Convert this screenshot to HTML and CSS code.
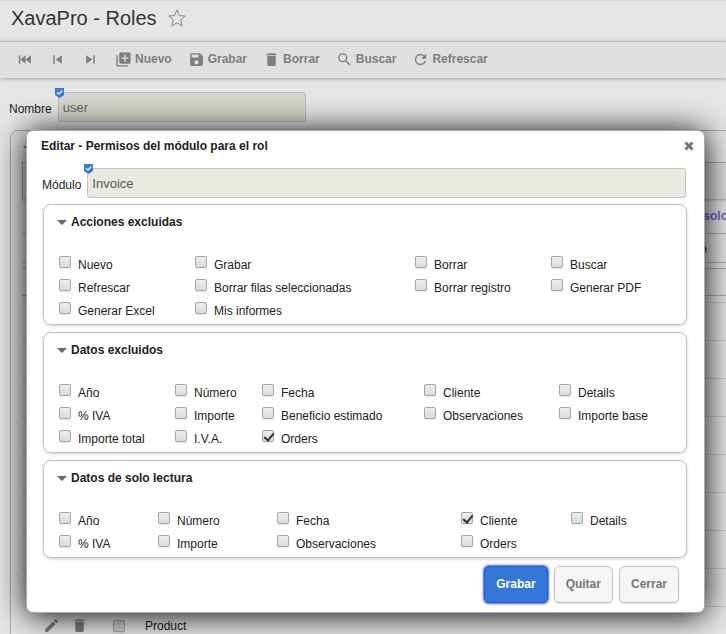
FILE: index.html
```html
<!DOCTYPE html>
<html lang="es">
<head>
<meta charset="utf-8">
<title>XavaPro - Roles</title>
<link rel="stylesheet" href="styles.css">
</head>
<body>
<svg class="defs" aria-hidden="true">
  <symbol id="i-first" viewBox="0 0 24 24"><path d="M21 6v12l-7.500-6zM4 6h2v12H4zM13.500 6v12L6 12z"/></symbol>
  <symbol id="i-prev" viewBox="0 0 24 24"><path d="M6 6h2v12H6zM9.500 12l8.500 6V6z"/></symbol>
  <symbol id="i-next" viewBox="0 0 24 24"><path d="M16 6h2v12h-2zM6 18l8.500-6L6 6z"/></symbol>
  <symbol id="i-new" viewBox="0 0 24 24"><path d="M4 6H2v14a2 2 0 0 0 2 2h14v-2H4V6zm16-4H8a2 2 0 0 0-2 2v12a2 2 0 0 0 2 2h12a2 2 0 0 0 2-2V4a2 2 0 0 0-2-2zm-1 9h-4v4h-2v-4H9V9h4V5h2v4h4v2z"/></symbol>
  <symbol id="i-save" viewBox="0 0 24 24"><path d="M17 3H5a2 2 0 0 0-2 2v14a2 2 0 0 0 2 2h14a2 2 0 0 0 2-2V7l-4-4zm-5 16a3 3 0 1 1 0-6 3 3 0 0 1 0 6zm3-10H5V5h10v4z"/></symbol>
  <symbol id="i-trash" viewBox="0 0 24 24"><path d="M6 19a2 2 0 0 0 2 2h8a2 2 0 0 0 2-2V7H6v12zM19 4h-3.500l-1-1h-5l-1 1H5v2h14V4z"/></symbol>
  <symbol id="i-search" viewBox="0 0 24 24"><path d="M15.500 14h-.79l-.28-.27A6.470 6.470 0 0 0 16 9.500 6.500 6.500 0 1 0 9.500 16c1.610 0 3.090-.59 4.230-1.570l.27.28v.79l5 4.990L20.490 19l-4.990-5zm-6 0a4.500 4.500 0 1 1 0-9 4.500 4.500 0 0 1 0 9z"/></symbol>
  <symbol id="i-refresh" viewBox="0 0 24 24"><path d="M17.650 6.350A7.960 7.960 0 0 0 12 4a8 8 0 1 0 7.730 10h-2.080A6 6 0 1 1 12 6c1.660 0 3.140.69 4.220 1.780L13 11h7V4l-2.350 2.350z"/></symbol>
  <symbol id="i-edit" viewBox="0 0 24 24"><path d="M3 17.250V21h3.750L17.810 9.940l-3.750-3.750L3 17.250zM20.710 7.040a1 1 0 0 0 0-1.410l-2.340-2.340a1 1 0 0 0-1.410 0l-1.830 1.830 3.750 3.750 1.830-1.830z"/></symbol>
  <symbol id="i-key" viewBox="0 0 9 10"><path fill="#3b78dc" d="M0 0h9v7L4.500 10 0 7z"/><path fill="none" stroke="#fff" stroke-width="1.200" d="M2 4.300l1.900 1.900L7.300 2.500"/></symbol>
</svg>

<header class="title-bar">
  <h1>XavaPro - Roles</h1>
  <svg class="star" viewBox="0 0 18 18" aria-hidden="true"><path d="M9 .8l2.300 5.800 6 .4-4.700 4 1.600 6L9 13.700 3.800 17l1.600-6L.7 7l6-.4z"/></svg>
</header>

<nav class="toolbar">
  <button aria-label="Primero"><svg class="icon"><use href="#i-first"/></svg></button>
  <button aria-label="Anterior"><svg class="icon"><use href="#i-prev"/></svg></button>
  <button aria-label="Siguiente"><svg class="icon"><use href="#i-next"/></svg></button>
  <button><svg class="icon"><use href="#i-new"/></svg>Nuevo</button>
  <button><svg class="icon"><use href="#i-save"/></svg>Grabar</button>
  <button><svg class="icon"><use href="#i-trash"/></svg>Borrar</button>
  <button><svg class="icon"><use href="#i-search"/></svg>Buscar</button>
  <button><svg class="icon"><use href="#i-refresh"/></svg>Refrescar</button>
</nav>

<main>
  <div class="field field-name">
    <label for="nombre">Nombre</label>
    <span class="key-input"><svg class="key"><use href="#i-key"/></svg><input id="nombre" value="user" readonly></span>
  </div>
  <section class="frame">
    <div class="frame-head"><i class="caret"></i></div>
    <div class="tabs"></div>
    <div class="actions"><a href="#">solo</a></div>
    <div class="list-head">e</div>
    <div class="filter"></div>
    <table class="list">
      <tbody>
        <tr><td></td></tr>
        <tr><td></td></tr>
        <tr><td></td></tr>
        <tr><td></td></tr>
        <tr><td></td></tr>
        <tr><td></td></tr>
        <tr><td></td></tr>
        <tr><td></td></tr>
        <tr><td><div class="row">
          <svg class="icon"><use href="#i-edit"/></svg>
          <svg class="icon"><use href="#i-trash"/></svg>
          <label><input type="checkbox">Product</label>
        </div></td></tr>
      </tbody>
    </table>
  </section>
</main>

<dialog open aria-labelledby="dlg-title">
  <div class="dialog-head">
    <h2 id="dlg-title">Editar - Permisos del módulo para el rol</h2>
    <button class="close" aria-label="Cerrar diálogo"><svg viewBox="0 0 10 10"><path d="M1.500 1.500l7 7M8.500 1.500l-7 7"/></svg></button>
  </div>
  <div class="field">
    <label for="modulo">Módulo</label>
    <span class="key-input"><svg class="key"><use href="#i-key"/></svg><input id="modulo" value="Invoice" readonly></span>
  </div>

  <section class="panel">
    <h3><i class="caret"></i>Acciones excluidas</h3>
    <div class="checks actions-grid">
      <label><input type="checkbox">Nuevo</label>
      <label><input type="checkbox">Grabar</label>
      <label><input type="checkbox">Borrar</label>
      <label><input type="checkbox">Buscar</label>
      <label><input type="checkbox">Refrescar</label>
      <label><input type="checkbox">Borrar filas seleccionadas</label>
      <label><input type="checkbox">Borrar registro</label>
      <label><input type="checkbox">Generar PDF</label>
      <label><input type="checkbox">Generar Excel</label>
      <label><input type="checkbox">Mis informes</label>
    </div>
  </section>

  <section class="panel">
    <h3><i class="caret"></i>Datos excluidos</h3>
    <div class="checks excluded-grid">
      <label><input type="checkbox">Año</label>
      <label><input type="checkbox">Número</label>
      <label><input type="checkbox">Fecha</label>
      <label><input type="checkbox">Cliente</label>
      <label><input type="checkbox">Details</label>
      <label><input type="checkbox">% IVA</label>
      <label><input type="checkbox">Importe</label>
      <label><input type="checkbox">Beneficio estimado</label>
      <label><input type="checkbox">Observaciones</label>
      <label><input type="checkbox">Importe base</label>
      <label><input type="checkbox">Importe total</label>
      <label><input type="checkbox">I.V.A.</label>
      <label><input type="checkbox" checked>Orders</label>
    </div>
  </section>

  <section class="panel">
    <h3><i class="caret"></i>Datos de solo lectura</h3>
    <div class="checks readonly-grid">
      <label><input type="checkbox">Año</label>
      <label><input type="checkbox">Número</label>
      <label><input type="checkbox">Fecha</label>
      <label><input type="checkbox" checked>Cliente</label>
      <label><input type="checkbox">Details</label>
      <label><input type="checkbox">% IVA</label>
      <label><input type="checkbox">Importe</label>
      <label><input type="checkbox">Observaciones</label>
      <label><input type="checkbox">Orders</label>
    </div>
  </section>

  <div class="buttons">
    <button class="btn primary">Grabar</button>
    <button class="btn">Quitar</button>
    <button class="btn">Cerrar</button>
  </div>
</dialog>
</body>
</html>
```
FILE: styles.css
```css
* { box-sizing: border-box; }

body {
  position: relative;
  margin: 0;
  height: 100vh;
  overflow: hidden;
  background: #e6e6e6;
  color: #222;
  font: 12px/16px "Liberation Sans", Arial, sans-serif;
}

h1, h2, h3 { margin: 0; }
button { font: inherit; cursor: pointer; }
.defs { position: absolute; width: 0; height: 0; }

.icon {
  width: 17px;
  height: 17px;
  flex: none;
  fill: #7d7d7d;
}

.title-bar {
  display: flex;
  align-items: center;
  gap: 11px;
  height: 41px;
  padding: 0 11px 6px;
  border-top: 1px solid #d4d4d4;
}
.title-bar h1 { font-size: 20px; line-height: 24px; font-weight: 400; color: #333; }
.star { width: 18px; height: 18px; fill: none; stroke: #888; stroke-width: 1; stroke-linejoin: round; }

.toolbar {
  display: flex;
  align-items: center;
  gap: 16px;
  height: 37px;
  padding: 0 16px 2px;
  background: #dfdfdf;
  border-top: 1px solid #bcbcbc;
  box-shadow: 0 1px 4px rgba(0, 0, 0, .3);
}
.toolbar button {
  display: flex;
  align-items: center;
  gap: 3px;
  padding: 0;
  border: 0;
  background: none;
  color: #7d7d7d;
  font-weight: 700;
}

.field { display: flex; align-items: center; gap: 6px; }
.field > label { padding-top: 3px; }
.key-input { position: relative; display: block; flex: 1; }
.key-input input {
  display: block;
  width: 100%;
  height: 30px;
  padding: 0 4px;
  border: 1px solid #c4c4c4;
  border-radius: 3px;
  background: #e9e9e1;
  color: #555;
  font: 13px/16px "Liberation Sans", Arial, sans-serif;
}
.key { position: absolute; left: -3px; top: -4px; width: 9px; height: 10px; }

.field-name { width: 306px; padding: 14px 0 8px 9px; }
.field-name input { background: #d5d5cd; border-color: #bbb; color: #666; }

.frame {
  margin: 0 -10px 0 10px;
  padding-left: 11px;
  border: 1px solid #aaa;
  border-radius: 8px;
}
.frame-head { height: 31px; padding: 15px 0 0 1px; }
.tabs { height: 38px; border: 1px solid #aaa; border-bottom-color: #bbb; box-shadow: 0 1px 2px rgba(0, 0, 0, .15); background: #dedede; }
.actions {
  height: 34px;
  padding: 8px 7px;
  border-bottom: 1px solid #aaa;
  text-align: right;
}
.actions a { color: #6a6ac0; font-weight: 700; text-decoration: none; }
.list-head { height: 29px; padding: 7px 28px; border-bottom: 1px solid #aaa; font-weight: 700; text-align: right; }
.filter { height: 28px; margin: 5px 0 6px; border: solid #aaa; border-width: 1px 0; }
.list { width: 100%; border-collapse: collapse; }
.list td { height: 38px; padding: 0; border-top: 1px solid #c8c8c8; }
.row { display: flex; align-items: center; gap: 11px; padding-left: 21px; }
.row label { display: flex; align-items: center; gap: 20px; margin-left: 14px; }
.row input[type="checkbox"] { background: #cfcfcf; }

.caret {
  display: block;
  width: 0;
  height: 0;
  border: 5px solid transparent;
  border-top-color: #666;
  border-bottom: 0;
}

input[type="checkbox"] {
  appearance: none;
  flex: none;
  width: 12px;
  height: 12px;
  margin: 0;
  border: 1px solid #a6a6a6;
  border-radius: 2px;
  background: linear-gradient(#ececec, #dcdcdc);
  box-shadow: 0 1px 1px rgba(0, 0, 0, .1);
}
input[type="checkbox"]:checked::before {
  content: "";
  display: block;
  width: 4px;
  height: 8px;
  margin: 0 0 0 3px;
  border: solid #333;
  border-width: 0 2px 2px 0;
  transform: rotate(40deg);
}

dialog {
  position: absolute;
  inset: 130px 21px auto 26px;
  width: auto;
  margin: 0;
  padding: 7px 17px 9px 16px;
  border: 1px solid #aaa;
  border-radius: 7px;
  background: #fff;
  color: #222;
  box-shadow: 0 2px 32px #000;
}
.dialog-head {
  display: flex;
  align-items: center;
  justify-content: space-between;
  height: 16px;
  margin: 0 -7px 14px -2px;
}
.dialog-head h2 { font-size: 12px; line-height: 16px; }
.close { display: flex; padding: 0; border: 0; background: none; }
.close svg { width: 10px; height: 10px; fill: none; stroke: #777; stroke-width: 3; }
dialog > .field { margin: 0 1px 6px -1px; }

.panel {
  margin-bottom: 7px;
  padding: 0 15px 1px;
  border: 1px solid #c4c4c4;
  border-radius: 8px;
  box-shadow: 0 1px 3px rgba(0, 0, 0, .2);
}
.panel h3 {
  display: flex;
  align-items: center;
  gap: 4px;
  height: 49px;
  padding: 0 0 15px;
  margin-left: -2px;
  font-size: 12px;
  line-height: 16px;
}
.checks { display: grid; grid-auto-rows: 23px; }
.checks label { display: flex; align-items: flex-start; gap: 7px; padding-top: 2px; line-height: 18px; white-space: nowrap; }
.actions-grid { grid-template-columns: 136fr 220fr 136fr 120fr; }
.excluded-grid { grid-template-columns: 116fr 87fr 162fr 135fr 112fr; }
.readonly-grid { grid-template-columns: 99fr 119fr 184fr 110fr 100fr; }

.buttons { display: flex; justify-content: flex-end; gap: 6px; padding: 1px 8px 0 0; }
.btn {
  height: 37px;
  padding: 0 11px 2px;
  border: 1px solid #c4c4c4;
  border-radius: 5px;
  background: #f5f5f5;
  color: #777;
  font-weight: 700;
  box-shadow: 0 1px 2px rgba(0, 0, 0, .12);
}
.primary { border-color: #1565c0; background: #3577d8; color: #fff; box-shadow: 0 0 2px 1px #5a5aff; }
```
